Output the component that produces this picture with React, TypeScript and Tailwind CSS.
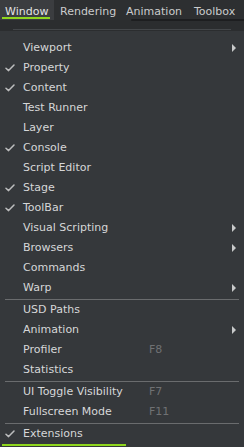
type Entry =
  | { kind: "item"; label: string; checked?: boolean; sub?: boolean; shortcut?: string }
  | { kind: "sep" };

const entries: Entry[] = [
  { kind: "item", label: "Viewport", sub: true },
  { kind: "item", label: "Property", checked: true },
  { kind: "item", label: "Content", checked: true },
  { kind: "item", label: "Test Runner" },
  { kind: "item", label: "Layer" },
  { kind: "item", label: "Console", checked: true },
  { kind: "item", label: "Script Editor" },
  { kind: "item", label: "Stage", checked: true },
  { kind: "item", label: "ToolBar", checked: true },
  { kind: "item", label: "Visual Scripting", sub: true },
  { kind: "item", label: "Browsers", sub: true },
  { kind: "item", label: "Commands" },
  { kind: "item", label: "Warp", sub: true },
  { kind: "sep" },
  { kind: "item", label: "USD Paths" },
  { kind: "item", label: "Animation", sub: true },
  { kind: "item", label: "Profiler", shortcut: "F8" },
  { kind: "item", label: "Statistics" },
  { kind: "sep" },
  { kind: "item", label: "UI Toggle Visibility", shortcut: "F7" },
  { kind: "item", label: "Fullscreen Mode", shortcut: "F11" },
  { kind: "sep" },
  { kind: "item", label: "Extensions", checked: true },
];

function Check() {
  return (
    <svg width="10" height="8" viewBox="0 0 10 8" fill="none">
      <path d="M1 4.2 L3.6 6.6 L9 1" stroke="#bcbdbe" strokeWidth="1.5" strokeLinecap="round" strokeLinejoin="round" />
    </svg>
  );
}

function Arrow() {
  return (
    <svg width="4" height="8" viewBox="0 0 4 8">
      <path d="M0 0 L4 4 L0 8 Z" fill="#c8c9ca" />
    </svg>
  );
}

function MenuItem({ label, checked, sub, shortcut }: { label: string; checked?: boolean; sub?: boolean; shortcut?: string }) {
  return (
    <div className="relative flex h-[20px] items-center">
      <div className="flex w-[23px] items-center justify-center pr-[4px]">{checked && <Check />}</div>
      <span className="w-[126px] whitespace-nowrap text-[#d6d7d8]">{label}</span>
      {shortcut && <span className="text-[#6f7173]">{shortcut}</span>}
      {sub && (
        <div className="absolute right-[8px] top-[6px] flex">
          <Arrow />
        </div>
      )}
    </div>
  );
}

export default function App() {
  return (
    <div
      className="flex h-[447px] w-[244px] flex-col overflow-hidden bg-[#35383b] text-[11px] leading-[20px]"
      style={{ fontFamily: '"DejaVu Sans", sans-serif' }}
    >
      <div className="relative flex h-[20px] shrink-0 bg-[#2d2f31] leading-[23px] text-[#cacbcc]">
        <div className="relative w-[54px] bg-[#3b3d40] pl-[5px] text-[#e2e3e4]">
          Window
          <div className="absolute bottom-[1px] left-[2px] h-[2px] w-[48px] bg-[#8fd61e]" />
        </div>
        <div className="w-[66px] pl-[6px]">Rendering</div>
        <div className="w-[68px] pl-[6px]">Animation</div>
        <div className="pl-[6px]">Toolbox</div>
        <div className="absolute bottom-[-1px] left-[131px] right-0 h-[2px] rounded-l-full bg-[#1d1e20]" />
      </div>
      <div className="flex h-[11px] shrink-0 flex-col bg-[#2b2d2f]">
        <div className="mx-[13px] mt-[9px] h-px bg-[#44474a]" />
      </div>
      <div className="flex flex-col pt-[7px]">
        {entries.map((e, i) =>
          e.kind === "sep" ? (
            <div key={i} className="flex h-[2px] flex-col justify-end px-[5px]">
              <div className="h-px bg-[#6a6c6e]" />
            </div>
          ) : (
            <MenuItem key={i} {...e} />
          )
        )}
        <div className="ml-[2px] h-[2px] w-[124px] bg-[#8fd61e]" />
      </div>
    </div>
  );
}
